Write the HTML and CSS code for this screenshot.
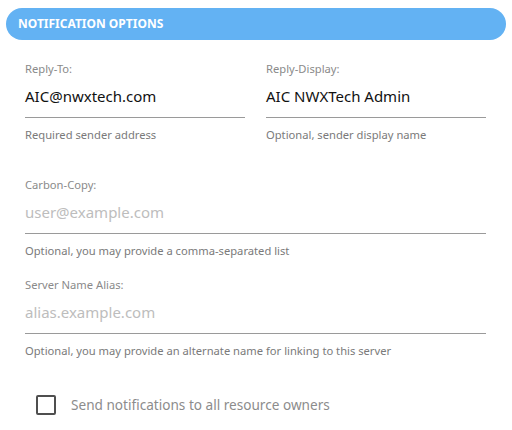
FILE: index.html
```html
<!DOCTYPE html>
<html>
<head>
<meta charset="utf-8">
<link rel="stylesheet" href="styles.css">
</head>
<body>
<div class="panel">
  <div class="header">NOTIFICATION OPTIONS</div>
  <div class="form">
    <div class="row two">
      <div class="field">
        <div class="label">Reply-To:</div>
        <div class="input">AIC@nwxtech.com</div>
        <div class="hint">Required sender address</div>
      </div>
      <div class="field">
        <div class="label">Reply-Display:</div>
        <div class="input">AIC NWXTech Admin</div>
        <div class="hint">Optional, sender display name</div>
      </div>
    </div>
    <div class="row cc">
      <div class="field">
        <div class="label">Carbon-Copy:</div>
        <div class="input placeholder">user@example.com</div>
        <div class="hint">Optional, you may provide a comma-separated list</div>
      </div>
    </div>
    <div class="row alias">
      <div class="field">
        <div class="label">Server Name Alias:</div>
        <div class="input placeholder">alias.example.com</div>
        <div class="hint">Optional, you may provide an alternate name for linking to this server</div>
      </div>
    </div>
    <label class="check">
      <span class="box"></span>
      <span class="check-text">Send notifications to all resource owners</span>
    </label>
  </div>
</div>
</body>
</html>
```
FILE: styles.css
```css
html, body {
  margin: 0;
  padding: 0;
  background: #ffffff;
}
body {
  font-family: "Noto Sans", "Open Sans", sans-serif;
  width: 512px;
  height: 430px;
  overflow: hidden;
}
.panel {
  padding: 8px 6px 0 6px;
}
.header {
  height: 32px;
  line-height: 32px;
  border-radius: 16px;
  background: #63b2f3;
  color: #ffffff;
  font-weight: 700;
  font-size: 12px;
  padding-left: 12px;
}
.form {
  padding: 21px 20px 0 19px;
}
.row {
  display: flex;
  gap: 21px;
}
.row.cc {
  margin-top: 34px;
}
.row.alias {
  margin-top: 18px;
}
.field {
  flex: 1;
  min-width: 0;
}
.label {
  font-size: 11.2px;
  line-height: 16px;
  color: #8a8a8a;
}
.input {
  margin-top: 8px;
  font-size: 15px;
  line-height: 22px;
  color: #111111;
  padding-bottom: 10px;
  border-bottom: 1px solid #9a9a9a;
  white-space: nowrap;
}
.input.placeholder {
  color: #bdbdbd;
}
.hint {
  margin-top: 9px;
  font-size: 11.2px;
  line-height: 16px;
  color: #7a7a7a;
  white-space: nowrap;
}
.check {
  display: flex;
  align-items: center;
  margin-top: 36px;
  margin-left: 11px;
}
.box {
  width: 16px;
  height: 16px;
  border: 2px solid #4f4f4f;
  border-radius: 2px;
  flex: none;
}
.check-text {
  margin-left: 15px;
  font-size: 13.6px;
  line-height: 20px;
  color: #8c8c8c;
}
```
